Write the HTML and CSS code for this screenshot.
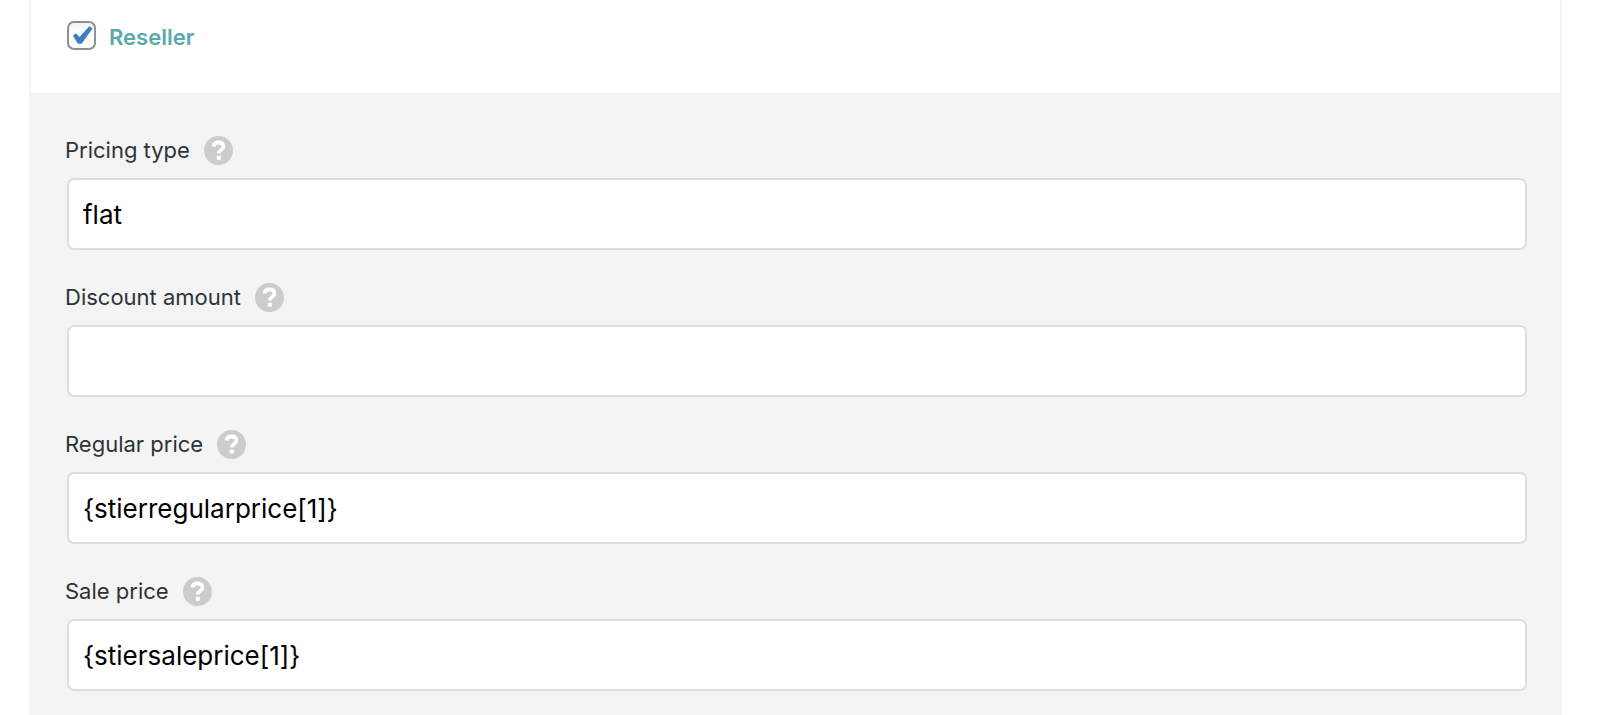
FILE: index.html
```html
<!DOCTYPE html>
<html lang="en">
<head>
<meta charset="utf-8">
<title>Reseller pricing</title>
<link rel="stylesheet" href="styles.css">
</head>
<body>
<svg class="symbols" aria-hidden="true">
  <symbol id="help" viewBox="0 0 29 29">
    <circle cx="14.5" cy="14.5" r="14.5" fill="#ccc"/>
    <path d="M9.600 10.600C9.700 7.700 11.800 6.500 14.500 6.500c2.900 0 4.900 1.400 4.900 3.900 0 3.800-4.600 3.500-4.600 7.200" fill="none" stroke="#fff" stroke-width="3.800"/>
    <rect x="12.800" y="19.700" width="4" height="4" rx=".5" fill="#fff"/>
  </symbol>
</svg>
<form class="panel">
  <header class="panel-header">
    <label class="toggle">
      <input class="toggle-box" type="checkbox" checked>
      <svg class="toggle-tick" viewBox="0 0 29 29" aria-hidden="true"><path d="M5.800 14.800 8.900 12.200l3.600 3.900L22.300 5.300l3.300 2.300L14.600 22.800h-3.600z" fill="#3f7cc0"/></svg>
      <span class="toggle-text">Reseller</span>
    </label>
  </header>
  <div class="fields">
    <div class="field">
      <div class="field-head">
        <label for="type">Pricing type</label>
        <button class="help" type="button" aria-label="Help: pricing type"><svg><use href="#help"/></svg></button>
      </div>
      <input class="field-input" id="type" type="text" value="flat">
    </div>
    <div class="field">
      <div class="field-head">
        <label for="discount">Discount amount</label>
        <button class="help" type="button" aria-label="Help: discount amount"><svg><use href="#help"/></svg></button>
      </div>
      <input class="field-input" id="discount" type="text">
    </div>
    <div class="field">
      <div class="field-head">
        <label for="regular">Regular price</label>
        <button class="help" type="button" aria-label="Help: regular price"><svg><use href="#help"/></svg></button>
      </div>
      <input class="field-input" id="regular" type="text" value="{stierregularprice[1]}">
    </div>
    <div class="field">
      <div class="field-head">
        <label for="sale">Sale price</label>
        <button class="help" type="button" aria-label="Help: sale price"><svg><use href="#help"/></svg></button>
      </div>
      <input class="field-input" id="sale" type="text" value="{stiersaleprice[1]}">
    </div>
  </div>
</form>
</body>
</html>
```
FILE: styles.css
```css
* {
  box-sizing: border-box;
}

body {
  margin: 0;
  padding: 0 38px 0 29px;
  background: #fff;
  color: #2c3338;
  font-family: Inter, "Liberation Sans", sans-serif;
}

.symbols {
  position: absolute;
  width: 0;
  height: 0;
}

.panel {
  display: flex;
  flex-direction: column;
  min-height: 100vh;
  border: solid #f4f4f4;
  border-width: 0 2px;
}

.panel-header {
  padding: 21px 36px 41px;
}

.toggle {
  position: relative;
  display: flex;
  align-items: flex-start;
  gap: 13px;
  width: fit-content;
  color: #5ba9ab;
  font-size: 22px;
  font-weight: 600;
  line-height: 29px;
}

.toggle-box {
  appearance: none;
  width: 29px;
  height: 29px;
  margin: 0;
  border: 2px solid #8c8f94;
  border-radius: 7px;
  background: linear-gradient(#f1f1f1, #fff 8px);
}

.toggle-tick {
  position: absolute;
  left: 0;
  top: 0;
  width: 29px;
  height: 29px;
  pointer-events: none;
}

.toggle-text {
  padding-top: 2px;
}

.fields {
  display: flex;
  flex: 1;
  flex-direction: column;
  gap: 33px;
  padding: 43px 33px 24px 34px;
  background: #f4f4f4;
}

.field {
  display: flex;
  flex-direction: column;
  gap: 13px;
}

.field-head {
  display: flex;
  align-items: center;
  gap: 14px;
  font-size: 22px;
  line-height: 29px;
}

.help {
  display: flex;
  padding: 0;
  border: 0;
  background: none;
}

.help svg {
  width: 29px;
  height: 29px;
}

.field-input {
  height: 72px;
  margin-left: 2px;
  padding: 0 14px;
  border: 2px solid #ddd;
  border-radius: 7px;
  background: #fff;
  color: #000;
  font: inherit;
  font-size: 26px;
}
```
